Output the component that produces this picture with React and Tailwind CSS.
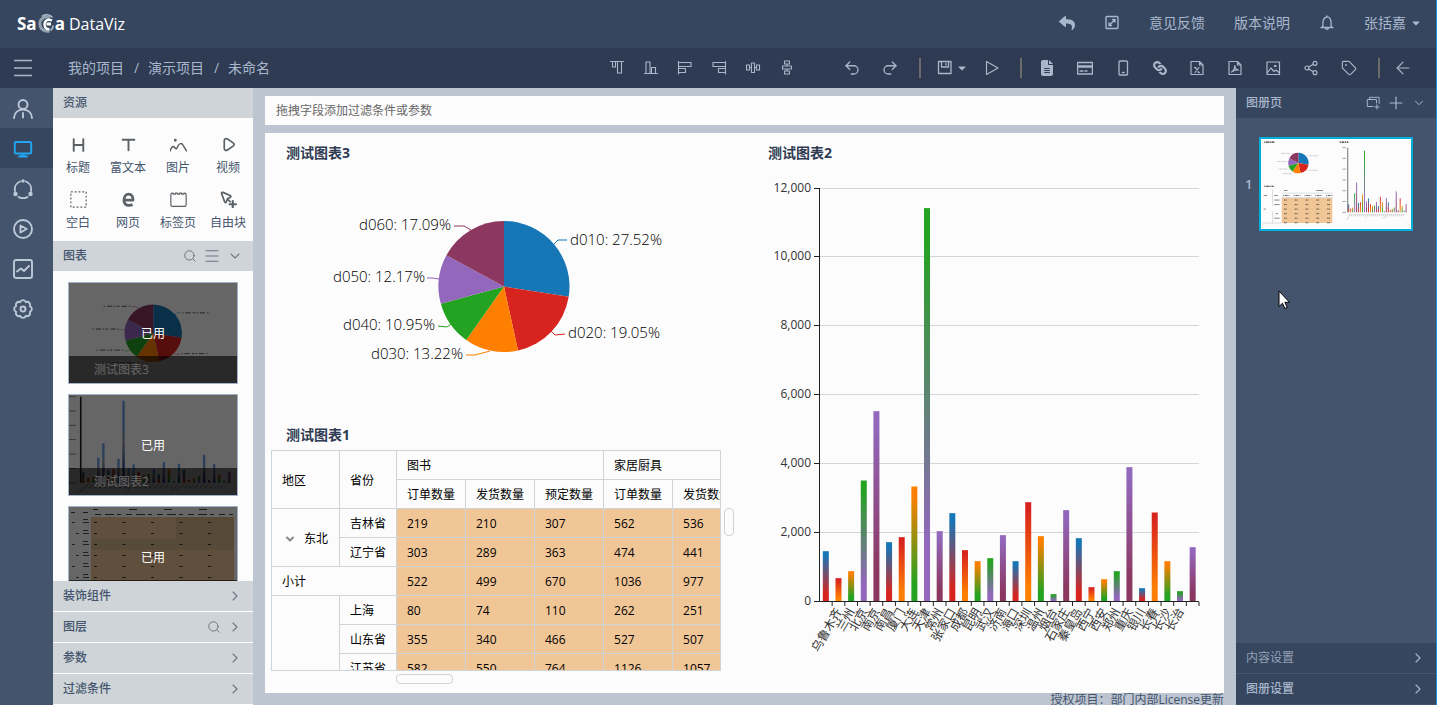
import { Undo2, Redo2, Share2, Tag, ArrowLeft, Search, Menu, ChevronDown, ChevronRight, Plus } from 'lucide-react';
import { FaReply, FaCaretDown, FaLink } from 'react-icons/fa';
import { FaFileLines } from 'react-icons/fa6';

const COLORS = {
  blue: '#1776b6',
  red: '#d8241f',
  orange: '#ff7f00',
  green: '#24a221',
  purple: '#9267bc',
  maroon: '#8c375f',
};

const SLICES = [
  { name: 'd010', pct: 27.52, color: COLORS.blue, line: '553,245 558,240 567,240', x: 570, y: 245, anchor: 'start' },
  { name: 'd020', pct: 19.05, color: COLORS.red, line: '551,331 555,335 565,334', x: 568, y: 338, anchor: 'start' },
  { name: 'd030', pct: 13.22, color: COLORS.orange, line: '490,351 475,355 466,355', x: 463, y: 359, anchor: 'end' },
  { name: 'd040', pct: 10.95, color: COLORS.green, line: '451,324 447,327 438,326', x: 435, y: 330, anchor: 'end' },
  { name: 'd050', pct: 12.17, color: COLORS.purple, line: '439,279 432,278 427,278', x: 425, y: 282, anchor: 'end' },
  { name: 'd060', pct: 17.09, color: COLORS.maroon, line: '471,230 464,226 454,226', x: 451, y: 230, anchor: 'end' },
];

const BARS = [
  1462, 678, 881, 3516, 5530, 1724, 1870, 3341, 11430, 2044, 2567, 1492, 1172, 1259, 1928,
  1172, 2886, 1898, 213, 2654, 1840, 416, 649, 881, 3903, 387, 2586, 1172, 300, 1579,
];

const CITIES = [
  '乌鲁木齐', '兰州', '北京', '南京', '南昌', '厦门', '大连', '天津', '常州', '张家口', '成都', '昆明', '武汉', '济南',
  '海口', '深圳', '温州', '烟台', '石家庄', '秦皇岛', '西宁', '西安', '郑州', '重庆', '银川', '长春', '长沙', '长治',
];

const GRADIENTS = [
  ['blue', 'red'],
  ['red', 'orange'],
  ['orange', 'green'],
  ['green', 'purple'],
  ['purple', 'maroon'],
];

const ROWS = [
  { region: '东北', span: 2, province: '吉林省', values: [219, 210, 307, 562, 536] },
  { province: '辽宁省', values: [303, 289, 363, 474, 441] },
  { total: '小计', values: [522, 499, 670, 1036, 977] },
  { region: '', span: 3, province: '上海', values: [80, 74, 110, 262, 251] },
  { province: '山东省', values: [355, 340, 466, 527, 507] },
  { province: '江苏省', values: [582, 550, 764, 1126, 1057] },
];

const Svg = ({ children, className = 'size-4', width = 1.1 }) => (
  <svg
    viewBox="0 0 16 16"
    className={className}
    fill="none"
    stroke="currentColor"
    strokeWidth={width}
    strokeLinecap="round"
    strokeLinejoin="round"
    aria-hidden="true"
  >
    {children}
  </svg>
);

/* ---------- charts ---------- */

function PieShapes({ mini }) {
  const cx = 504;
  const cy = 286.5;
  const r = 65.5;
  let angle = -Math.PI / 2;
  return (
    <g>
      {SLICES.map((s) => {
        const start = angle;
        angle += (s.pct / 100) * Math.PI * 2;
        const x1 = cx + r * Math.cos(start);
        const y1 = cy + r * Math.sin(start);
        const x2 = cx + r * Math.cos(angle);
        const y2 = cy + r * Math.sin(angle);
        return (
          <g key={s.name}>
            <path d={`M${cx} ${cy}L${x1} ${y1}A${r} ${r} 0 0 1 ${x2} ${y2}Z`} fill={s.color} />
            <polyline points={s.line} fill="none" stroke={s.color} />
            {mini ? (
              <line
                x1={s.x}
                x2={s.anchor === 'end' ? s.x - 60 : s.x + 60}
                y1={s.y - 5}
                y2={s.y - 5}
                stroke="#444"
                strokeWidth="2"
                strokeDasharray="3 4 12 5 6 3"
              />
            ) : (
              <text x={s.x} y={s.y} textAnchor={s.anchor} className="fill-black text-[15px] font-light">
                {s.name}: {s.pct.toFixed(2)}%
              </text>
            )}
          </g>
        );
      })}
    </g>
  );
}

function BarShapes({ mini, muted, id }) {
  const left = 819.5;
  const base = 601.5;
  const step = 379.5 / BARS.length;
  const unit = 413 / 12000;
  return (
    <g>
      <defs>
        {GRADIENTS.map(([from, to], i) => (
          <linearGradient key={from} id={`${id}-${i}`} x1="0" y1="0" x2="0" y2="1">
            <stop offset="0.08" stopColor={COLORS[from]} />
            <stop offset="0.85" stopColor={COLORS[to]} />
          </linearGradient>
        ))}
        <linearGradient id={`${id}-muted`} x1="0" y1="0" x2="0" y2="1">
          <stop offset="0.3" stopColor="#6d9ce6" />
          <stop offset="0.5" stopColor="#8f979e" />
          <stop offset="0.9" stopColor="#20359a" />
        </linearGradient>
      </defs>
      {[0, 2000, 4000, 6000, 8000, 10000, 12000].map((v) => {
        const y = Math.round(base - v * unit) - 0.5;
        return (
          <g key={v}>
            {v > 0 && !mini && <line x1={left} x2="1199" y1={y} y2={y} stroke="#d3d6d9" />}
            {!mini && <line x1="814" x2={left} y1={y} y2={y} stroke="#222" />}
            {mini ? (
              <line x1="785" x2="808" y1={y} y2={y} stroke="#777" strokeWidth="4" />
            ) : (
              <text x="811" y={y + 3} textAnchor="end" className="fill-[#333] text-xs">
                {v.toLocaleString('en-US')}
              </text>
            )}
          </g>
        );
      })}
      {BARS.map((v, i) => (
        <rect
          key={i}
          x={left + step * (i + 0.5) - 3}
          y={base - v * unit}
          width="6"
          height={v * unit}
          fill={muted && v > 1900 ? `url(#${id}-muted)` : `url(#${id}-${i % 5})`}
        />
      ))}
      <path d={`M${left} 188V601.5${mini ? '' : 'H1199'}`} fill="none" stroke="#222" strokeWidth={mini ? 4 : 1} />
      {!mini && BARS.map((v, i) => (
        <line key={i} x1={left + step * (i + 1)} x2={left + step * (i + 1)} y1="602" y2="606" stroke="#222" />
      ))}
      {CITIES.map((city, i) => {
        const at = `translate(${left + step * (i + 1.5)} 609) rotate(-60)`;
        return mini ? (
          <line key={city} x1="-4" x2={city.length * -12} y1="0" y2="0" transform={at} stroke="#777" strokeWidth="3" strokeDasharray="6 4" />
        ) : (
          <text key={city} transform={at} textAnchor="end" dominantBaseline="central" className="fill-[#333] text-xs">
            {city}
          </text>
        );
      })}
    </g>
  );
}

/* simplified pivot table for the page preview */
function TableShapes() {
  return (
    <g>
      <rect x="397" y="508" width="324" height="162" fill="#f1c697" />
      <path d="M397 479H721M397 508H721M339 455V560M339 595V670M271 670H397" stroke="#cfd4d8" strokeWidth="5" />
      {[0, 1, 2, 3, 4].map((c) => (
        <g key={c} stroke="#333">
          <path d={`M${405 + c * 69} 494h44`} strokeWidth="5" strokeDasharray="6 6 14 3" />
          {[0, 1, 2, 3, 4, 5].map((r) => (
            <path key={r} d={`M${412 + c * 69} ${523 + r * 29}h18`} strokeWidth="5" strokeDasharray="10 2" />
          ))}
        </g>
      ))}
      <path d="M282 494h22M350 494h22M412 462h22M618 462h44M350 523h34M350 552h34M282 581h14M360 610h14M350 639h34" stroke="#666" strokeWidth="5" />
    </g>
  );
}

/* zoomed-out pivot table for the chart list, all columns in view */
function WideTableShapes() {
  return (
    <g>
      <rect x="22" y="10" width="143" height="90" fill="#f1c697" />
      <rect x="107" y="10" width="58" height="22" fill="#d9b78d" />
      <rect x="22" y="32" width="143" height="11" fill="#dcb88c" />
      <path d="M24 2.500h5M60 2.500h8M95 2.500h8M130 2.500h8M2 5.500h4M14 5.500h5" stroke="#444" />
      <path d="M26 7.500h138" stroke="#444" strokeDasharray="6 4 9 3 4 5" />
      {[0, 1, 2, 3, 4, 5, 6, 7].map((r) => (
        <g key={r} stroke="#333">
          <path d={`M14 ${15.5 + r * 11}h6M14 ${12.5 + r * 11}h5M${3 + (r % 2) * 4} ${15.5 + r * 11}h3`} stroke="#555" />
          <path d={`M25 ${15.5 + r * 11}h140`} strokeDasharray="3 25.500" />
        </g>
      ))}
    </g>
  );
}

function ChartTitle({ children }) {
  return <h2 className="h-5 text-sm leading-5 font-bold text-[#2f3b52]">{children}</h2>;
}

function PivotTable() {
  const cell = 'h-[29px] border-r border-b border-[#cfd4d8] px-2.5 pt-0.5 text-left font-normal whitespace-nowrap';
  return (
    <div className="h-[221px] w-[450px] overflow-hidden border border-[#cfd4d8]">
      <table className="w-[470px] table-fixed border-separate border-spacing-0 text-xs text-black">
        <colgroup>
          <col className="w-[68px]" />
          <col className="w-[57px]" />
          <col className="w-[69px]" />
          <col className="w-[69px]" />
          <col className="w-[69px]" />
          <col className="w-[69px]" />
          <col className="w-[69px]" />
        </colgroup>
        <thead>
          <tr>
            <th rowSpan={2} className={cell}>地区</th>
            <th rowSpan={2} className={cell}>省份</th>
            <th colSpan={3} className={cell}>图书</th>
            <th colSpan={2} className={cell}>家居厨具</th>
          </tr>
          <tr>
            {['订单数量', '发货数量', '预定数量', '订单数量', '发货数量'].map((h, i) => (
              <th key={i} className={cell}>{h}</th>
            ))}
          </tr>
        </thead>
        <tbody>
          {ROWS.map((row, i) => (
            <tr key={i}>
              {row.total && <td colSpan={2} className={cell}>{row.total}</td>}
              {row.span && (
                <td rowSpan={row.span} className={cell}>
                  {row.region && (
                    <button className="flex items-center gap-2 pl-0.5">
                      <ChevronDown className="size-3 shrink-0 text-[#888]" strokeWidth={4} />
                      {row.region}
                    </button>
                  )}
                </td>
              )}
              {row.province && <td className={cell}>{row.province}</td>}
              {row.values.map((v, c) => (
                <td key={c} className={`${cell} bg-[#f1c697]`}>{v}</td>
              ))}
            </tr>
          ))}
        </tbody>
      </table>
    </div>
  );
}

/* ---------- top bars ---------- */

function Logo() {
  return (
    <a href="#" aria-label="SaCa DataViz" className="flex items-center pt-0.5 text-white">
      <span className="text-[17px] leading-6 font-bold">Sa</span>
      <svg viewBox="0 0 18 22" className="h-[22px] w-[18px]" fill="none">
        <path d="M13 4.500C7 2.500 2.500 6 3 11.500c.3 4.500 4 7.500 9.500 6.500" stroke="#8fa1ae" strokeWidth="3" />
        <path d="M5 3.500C8.500.8 13 1 15.500 4.500M13.500 17.500c1.500-1 2.500-3 2.500-5" stroke="#a9b8c2" strokeWidth="1.600" />
        <path d="M15 7.500c-4-2-7.500 0-7.500 3.800 0 3.400 2 5.200 5 5" stroke="#fff" strokeWidth="2.400" />
        <path d="M9.500 9.500h4.500v3h-4.500z" fill="#fff" />
      </svg>
      <span className="text-[17px] leading-6 font-bold">a</span>
      <span className="pl-1 text-base leading-6">DataViz</span>
    </a>
  );
}

function Header() {
  return (
    <header className="flex h-12 shrink-0 items-center justify-between bg-[#37465f] pr-3.5 pb-0.5 pl-[17px] text-sm text-[#a9b7cc]">
      <Logo />
      <nav className="flex items-center gap-[29px]">
        <button aria-label="返回"><FaReply className="size-4" /></button>
        <button aria-label="编辑">
          <Svg width={1.4}>
            <rect x="2" y="1.500" width="12" height="12" rx="1" />
            <path d="M5.500 10 10.500 5M8.500 4.500h2.500v2.500M5 8v2.500h2.500" />
          </Svg>
        </button>
        <a href="#">意见反馈</a>
        <a href="#">版本说明</a>
        <button aria-label="通知">
          <Svg width={1.3}>
            <path d="M2 12.500h12M3.500 12.500C4 11 4 9.500 4 7.500 4 4.500 5.500 2.500 8 2s4 2.500 4 5.500c0 2 0 3.500.5 5M6.500 13c.3 1.800 2.700 1.800 3 0M8 1v1" />
          </Svg>
        </button>
        <button className="flex items-center gap-1">
          张括嘉
          <FaCaretDown className="size-3" />
        </button>
      </nav>
    </header>
  );
}

function Divider({ className }) {
  return <span className={`h-5 w-0.5 bg-[#6c6b6c] ${className}`} />;
}

const ALIGN = [
  ['顶部对齐', 'M1.500 1.500h13M3.500 1.500v5.500h3v-5.500M8.500 1.500v11.500h4v-11.500'],
  ['底部对齐', 'M1.500 13.500h13M3 13.500v-11.500h4v11.500M8.500 13.500v-6h4v6'],
  ['左对齐', 'M1.500 1.500v12.500M1.500 2.500h12.500v4h-12.500M1.500 8.500h7v4h-7'],
  ['右对齐', 'M14.500 1.500v12.500M14.500 2.500h-12.500v4h12.500M14.500 8.500h-7v4h7'],
  ['水平居中', 'M1.500 5h3v5h-3zM6.500 3h3v9.500h-3zM11.500 5h3v5h-3zM4.500 7.500h2M9.500 7.500h2'],
  ['垂直居中', 'M5.500 1h5v3h-5zM3.500 6h9v3h-9zM5.500 11h5v3h-5zM8 4v2M8 9v2'],
];

function Toolbar() {
  return (
    <div className="flex h-10 shrink-0 items-center bg-[#2f3b52] pr-[23px] text-[#a9b7cc]">
      <button aria-label="菜单" className="ml-3.5 w-[18px]">
        <svg viewBox="0 0 18 18" className="size-[18px]" stroke="currentColor" strokeWidth="1.500">
          <path d="M0 1.500h18M0 9h18M0 16.500h18" />
        </svg>
      </button>
      <nav className="ml-9 flex gap-2.5 text-sm">
        <a href="#">我的项目</a>
        <span className="w-1">/</span>
        <a href="#">演示项目</a>
        <span className="w-1">/</span>
        <span>未命名</span>
      </nav>
      <div className="ml-auto flex items-center gap-[18px]">
        {ALIGN.map(([label, d]) => (
          <button key={label} aria-label={label}><Svg><path d={d} /></Svg></button>
        ))}
      </div>
      <button aria-label="撤销" className="ml-12"><Undo2 className="size-[18px]" strokeWidth={1.7} /></button>
      <button aria-label="重做" className="ml-5"><Redo2 className="size-[18px]" strokeWidth={1.7} /></button>
      <Divider className="ml-5" />
      <button aria-label="保存" className="ml-4 flex items-center gap-[3px]">
        <Svg width={1.3}>
          <path d="M1.500 1.500h12.500v12h-12.500zM4.500 1.500v5.500h7v-5.500M9 3.500v1.500" />
        </Svg>
        <FaCaretDown className="size-3" />
      </button>
      <button aria-label="预览" className="ml-3.5 pl-0.5">
        <Svg width={1.2}><path d="M2.500 1.500v13L14 8z" /></Svg>
      </button>
      <Divider className="ml-5" />
      <div className="ml-[17px] flex w-[318px] items-center justify-between">
        <button aria-label="文档"><FaFileLines className="size-4" /></button>
        <button aria-label="卡片">
          <Svg width={1.3}><rect x=".6" y="2.500" width="14.800" height="11.500" /><path d="M1 6.500h14" strokeWidth="2.500" /><path d="M3 11h3M8 11h2" /></Svg>
        </button>
        <button aria-label="手机">
          <Svg width={1.3}><rect x="4" y="1" width="8.500" height="14" rx="1" /><path d="M7.500 12.500h1.500" strokeWidth="1.500" /></Svg>
        </button>
        <button aria-label="链接"><FaLink className="size-3.5 rotate-90" /></button>
        <button aria-label="导出 Excel">
          <Svg width={1.2}><path d="M2 1.500h8.500l3.500 3.500v9.500h-12zM10.500 1.500v3.500h3.500M6 7.500l4 5M10 7.500l-4 5M5.500 7.500h1.500M9 12.500h1.500" /></Svg>
        </button>
        <button aria-label="导出 PDF">
          <Svg width={1.2}><path d="M2 1.500h8.500l3.500 3.500v9.500h-12zM10.500 1.500v3.500h3.500M4.500 12c2-.8 3.500-4 3.300-6.500.2 2 1.500 4 3.700 4.500-2.500-.3-4.500.3-7 2" /></Svg>
        </button>
        <button aria-label="导出图片">
          <Svg width={1.2}><rect x="2" y="2" width="12.500" height="12.500" /><path d="M2.500 12.500 6 8l3 3.500L11 10l3 2.500M9.500 5.500h1.500v1h-1.500z" /></Svg>
        </button>
        <button aria-label="分享"><Share2 className="size-4" strokeWidth={1.7} /></button>
        <button aria-label="标签"><Tag className="size-4" strokeWidth={1.7} /></button>
      </div>
      <Divider className="ml-[21px]" />
      <button aria-label="收起" className="ml-[13px]"><ArrowLeft className="size-5" strokeWidth={1.4} /></button>
    </div>
  );
}

/* ---------- left side ---------- */

// eight round lobes on a ring
const GEAR = Array.from({ length: 9 }, (_, k) => {
  const a = ((22.5 + 45 * k) * Math.PI) / 180;
  const point = `${(10 + 7.4 * Math.cos(a)).toFixed(2)} ${(10 + 7.4 * Math.sin(a)).toFixed(2)}`;
  return k === 0 ? `M${point}` : `A3 3 0 0 1 ${point}`;
}).join('') + 'Z';

const RAIL = [
  ['用户', <><circle cx="10" cy="5.500" r="4.500" /><path d="M1 19c.3-5 3.800-8.500 9-8.500s8.700 3.500 9 8.500M10 14v4.500" /></>],
  ['仪表盘', <><rect x="1.800" y="3" width="16.400" height="11.500" rx="1" /><path d="M6 17.500h8M8.500 16.500h3" /></>],
  ['流程', <>
    <path d="M2 12A8.500 8.500 0 0 1 7 2.500M13 2.500a8.500 8.500 0 0 1 5 9.500M5.500 18a9 9 0 0 0 9 0" />
    <g fill="currentColor" stroke="none"><circle cx="10" cy="2" r="1.800" /><circle cx="2.500" cy="15" r="2.200" /><circle cx="17.500" cy="15" r="2.200" /></g>
  </>],
  ['播放', <><circle cx="10" cy="10" r="9" /><path d="M7.500 6.500v7l6.200-3.500z" /></>],
  ['图表', <><rect x="1" y="1" width="18" height="18" rx="2" /><path d="m4 12.500 4-3 3 2.500 5-5" /></>],
  ['设置', <><path d={GEAR} /><circle cx="10" cy="10" r="2.500" /></>],
];

function Rail() {
  return (
    <nav className="w-[53px] shrink-0 bg-[#44546d]">
      {RAIL.map(([label, icon], i) => (
        <button
          key={label}
          aria-label={label}
          className={`flex h-10 w-full items-center pt-0.5 pl-[13px] ${i === 1 ? 'bg-[#37465f] text-[#22a5f1]' : 'text-[#bdc8d8]'}`}
        >
          <svg viewBox="0 0 20 20" className="size-5" fill="none" stroke="currentColor" strokeWidth="1.900" strokeLinecap="round" strokeLinejoin="round">
            {icon}
          </svg>
        </button>
      ))}
    </nav>
  );
}

const WIDGETS = [
  ['标题', <path d="M3.500 3v11M12.500 3v11M3.500 8.500h9" strokeWidth="1.800" />],
  ['富文本', <path d="M2.500 3.500h11M8 3.500v10" strokeWidth="1.800" />],
  ['图片', <><path d="M0 14c1.500-4 3-5 4.500-3s2 1 3-1.500 3.500-3.500 5-.5l3 5" strokeWidth="1.400" /><circle cx="5" cy="4" r=".8" fill="currentColor" /></>],
  ['视频', <path d="M4 4.500c0-2 1.500-2.500 3-1.600l5 3.300c1.800 1.200 1.800 2.400 0 3.600l-5 3.300c-1.500 1-3 .4-3-1.600z" strokeWidth="1.600" />],
  ['空白', <rect x=".8" y=".8" width="14.400" height="14.400" strokeDasharray="1.800 1.800" strokeLinecap="butt" />],
  ['网页', <path d="M4 8.500h8.300C12.300 5 10.800 3 8.200 3S3.700 5.300 3.700 8.700s2 4.800 4.800 4.800c1.300 0 2.400-.3 3.300-.8" strokeWidth="2.600" strokeLinecap="butt" />],
  ['标签页', <path d="M.8 3.500c0-1 .5-1.500 1.500-1.500h.7v1h2v-1h2v1h2v-1h2v1h2v-1h.7c1 0 1.500.5 1.500 1.500v9.500c0 1-.5 1.500-1.500 1.500h-11.400c-1 0-1.500-.5-1.500-1.500z" />],
  ['自由块', <><path d="M1.500 2.500c-.2-1 .4-1.500 1.300-1.200l6.700 3c1 .5.900 1.300 0 1.700l-2.500 1.200-1 3c-.4 1-1.300 1-1.600 0zM7.500 8l2 2" strokeWidth="1.600" /><path d="M12 9.500v6M9 12.500h6" strokeWidth="2" /></>],
];

function PanelHeader({ title, children }) {
  return (
    <div className="flex h-[30px] shrink-0 items-center justify-between bg-[#cfd4d8] px-2.5">
      <h3 className="text-xs font-medium text-[#44546d]">{title}</h3>
      <div className="flex items-center gap-1.5 text-[#6b7682]">{children}</div>
    </div>
  );
}

function UsedChart({ title, children }) {
  return (
    <div className="relative h-[102px] shrink-0 border border-[#a3b1c8] bg-white">
      {children}
      <div className="absolute inset-x-0 bottom-0 h-[27px] bg-black/60 pl-[25px] text-xs leading-[27px] text-white">{title}</div>
      <div className="absolute inset-0 flex items-center justify-center bg-black/60 pt-0.5 text-xs text-white">已用</div>
    </div>
  );
}

function ResourcePanel() {
  return (
    <aside className="flex w-[200px] shrink-0 flex-col bg-[#fcfcfc]">
      <PanelHeader title="资源" />
      <div className="grid grid-cols-4 gap-y-3.5 pt-[18px] pb-[9px]">
        {WIDGETS.map(([label, icon]) => (
          <button key={label} className="flex flex-col items-center gap-1.5 text-[#5c6166]">
            <Svg className="h-[17px] w-[17px]">{icon}</Svg>
            <span className="text-xs leading-[18px] whitespace-nowrap text-[#44546d]">{label}</span>
          </button>
        ))}
      </div>
      <PanelHeader title="图表">
        <button aria-label="搜索图表"><Search className="size-3.5" strokeWidth={1.7} /></button>
        <button aria-label="列表"><Menu className="size-[18px]" strokeWidth={1.6} /></button>
        <button aria-label="折叠图表"><ChevronDown className="size-4" strokeWidth={1.6} /></button>
      </PanelHeader>
      <div className="flex min-h-0 flex-1 flex-col gap-2.5 overflow-hidden px-[15px] pt-[11px]">
        <UsedChart title="测试图表3">
          <svg viewBox="312 172 383 228" className="h-full w-full"><PieShapes mini /></svg>
        </UsedChart>
        <UsedChart title="测试图表2">
          <svg viewBox="790 180 422 480" preserveAspectRatio="none" className="h-full w-full"><BarShapes mini muted id="thumb" /></svg>
        </UsedChart>
        <UsedChart>
          <svg viewBox="0 0 168 100" className="h-full w-full"><WideTableShapes /></svg>
        </UsedChart>
      </div>
      {['装饰组件', '图层', '参数', '过滤条件'].map((title) => (
        <div key={title} className="shrink-0 border-b border-white">
          <PanelHeader title={title}>
            {title === '图层' && <button aria-label="搜索图层"><Search className="size-3.5" strokeWidth={1.7} /></button>}
            <button aria-label={`展开${title}`}><ChevronRight className="size-4" strokeWidth={1.6} /></button>
          </PanelHeader>
        </div>
      ))}
    </aside>
  );
}

/* ---------- workspace ---------- */

function Workspace() {
  return (
    <main className="flex min-w-0 flex-1 flex-col bg-[#bdc5d1] px-3 pt-2">
      <div className="mb-2 h-[29px] shrink-0 bg-[#fcfcfc] px-[11px] text-xs leading-[29px] text-[#666]">
        拖拽字段添加过滤条件或参数
      </div>
      <div className="flex min-h-0 flex-1 overflow-hidden bg-[#fcfcfc]">
        <section className="w-[480px] shrink-0 pt-2.5">
          <div className="pl-[21px]"><ChartTitle>测试图表3</ChartTitle></div>
          <svg viewBox="265 163 480 262" className="block w-full"><PieShapes /></svg>
          <div className="pl-[21px]"><ChartTitle>测试图表1</ChartTitle></div>
          <div className="mt-[5px] flex gap-[3px] pl-1.5">
            <PivotTable />
            <div className="mt-[58px] h-7 w-2.5 rounded-sm border border-[#cfd4d8]" />
          </div>
          <div className="mt-[3px] ml-[131px] h-2.5 w-[57px] rounded-sm border border-[#cfd4d8]" />
        </section>
        <section className="min-w-0 flex-1 pt-2.5">
          <div className="pl-[23px]"><ChartTitle>测试图表2</ChartTitle></div>
          <svg viewBox="745 163 479 510" className="block w-full"><BarShapes id="bar" /></svg>
        </section>
      </div>
      <p className="h-3 shrink-0 text-right text-xs leading-[14px] text-[#44546d]">授权项目：部门内部License更新</p>
    </main>
  );
}

function AlbumPanel() {
  return (
    <aside className="relative flex w-[200px] shrink-0 flex-col bg-[#44546d] text-xs text-[#a9b7cc]">
      <div className="flex h-[30px] items-center justify-between bg-[#37465f] px-2.5">
        <h3 className="font-medium">图册页</h3>
        <div className="flex items-center gap-1.5">
          <button aria-label="复制页">
            <Svg className="size-3.5"><path d="M4 4v-2.500h11v7M8 12h-6.500v-8h10.500v4M12.500 10v5M10 12.500h5" /></Svg>
          </button>
          <button aria-label="新增页"><Plus className="size-5" strokeWidth={1.4} /></button>
          <button aria-label="折叠"><ChevronDown className="size-3.5" strokeWidth={1.7} /></button>
        </div>
      </div>
      <div className="flex flex-1 items-start pt-[19px] pl-[9px]">
        <span className="w-3.5 self-start pt-[39px] text-[13px] leading-4 font-semibold">1</span>
        <button aria-label="第 1 页" className="h-[94px] w-[154px] border-2 border-[#00b0dc] bg-[#fcfcfc]">
          <svg viewBox="265 133 959 575" className="h-full w-full">
            <path d="M286 153h64M768 153h56M286 435h60" stroke="#333" strokeWidth="7" strokeDasharray="8 4 18 4" />
            <PieShapes mini />
            <BarShapes mini id="page" />
            <TableShapes />
          </svg>
        </button>
      </div>
      {['内容设置', '图册设置'].map((title, i) => (
        <button
          key={title}
          className="flex h-[31px] items-center justify-between border-b border-[#44546d] bg-[#37465f] px-2.5"
        >
          <span className={i === 0 ? 'text-[#94a1b6]' : 'font-medium'}>{title}</span>
          <ChevronRight className="size-4" strokeWidth={1.7} />
        </button>
      ))}
      <svg viewBox="0 0 12 20" className="absolute top-[202px] left-[42px] h-5 w-3" fill="#fff" stroke="#000">
        <path d="M1 1v15.500l3.500-3.300 2.400 5.300 2.300-1-2.300-5.200h4.600z" />
      </svg>
    </aside>
  );
}

export default function App() {
  return (
    <div className="flex h-screen flex-col overflow-hidden border-r border-[#1b8fe0] font-['Open_Sans','Noto_Sans_CJK_SC',sans-serif]">
      <Header />
      <Toolbar />
      <div className="flex min-h-0 flex-1">
        <Rail />
        <ResourcePanel />
        <Workspace />
        <AlbumPanel />
      </div>
    </div>
  );
}
